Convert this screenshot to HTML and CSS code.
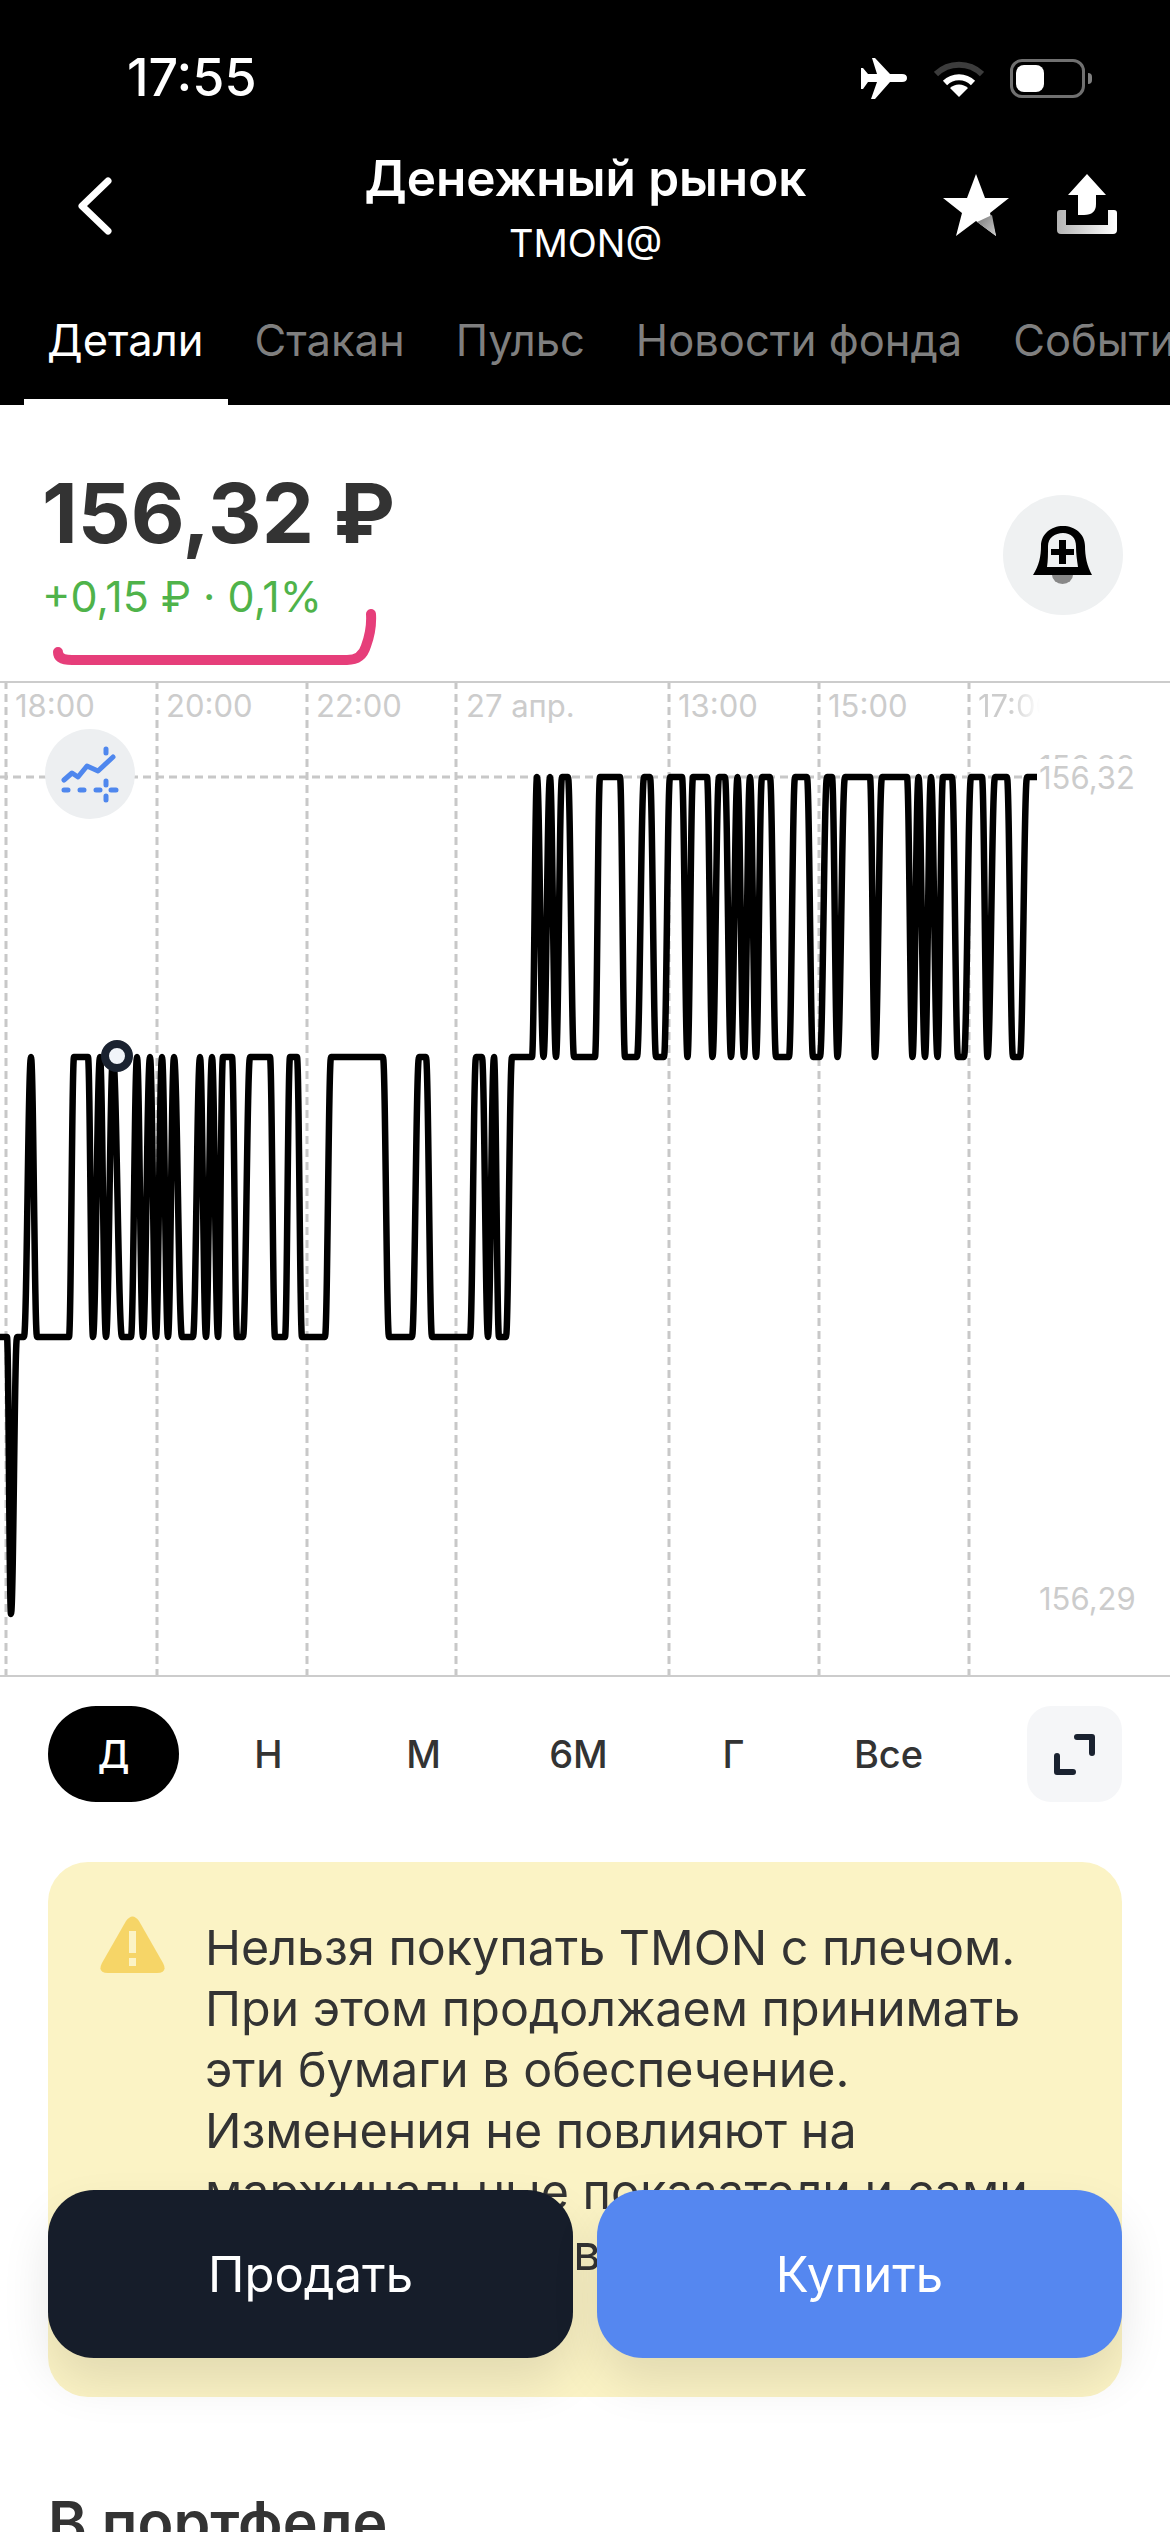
FILE: index.html
```html
<!DOCTYPE html>
<html lang="ru">
<head>
    <meta charset="UTF-8">
    <meta name="viewport" content="width=device-width, initial-scale=1.0">
    <title>Денежный рынок</title>
    <link rel="stylesheet" href="styles.css">
</head>
<body>
<div class="screen">
    <header class="top">
        <div class="status">
            <span class="time">17:55</span>
            <div class="status-icons">
                <svg class="plane" width="46" height="41" viewBox="0 0 46 41"><path fill="#fff" d="M46 20Q46 16 41 16H29L14 0H11L16 16H7L2 10H0V31H2L7 24H16L10 41H14L29 24H41Q46 24 46 20Z"/></svg>
                <svg class="wifi" width="50" height="37" viewBox="0 0 50 37" fill="none"><path d="M2 14A33 33 0 0 1 48 14" stroke="#3c3c3c" stroke-width="6"/><path d="M11 23A20 20 0 0 1 39 23" stroke="#fff" stroke-width="6"/><path fill="#fff" d="M25 37L16 28A13 13 0 0 1 34 28Z"/></svg>
                <div class="battery"><div class="battery-level"></div></div>
                <div class="battery-nub"></div>
            </div>
        </div>
        <div class="nav">
            <svg class="back" width="34" height="58" viewBox="0 0 34 58" fill="none"><path d="M30 4L4 29L30 54" stroke="#fff" stroke-width="7" stroke-linecap="round" stroke-linejoin="round"/></svg>
            <div class="title">
                <div class="title-name">Денежный рынок</div>
                <div class="title-ticker">TMON@</div>
            </div>
            <div class="nav-actions">
                <svg width="66" height="62" viewBox="0 0 66 62">
                    <defs><linearGradient id="starShade" x1="0" y1="0" x2="1" y2="1"><stop offset="0" stop-color="#777"/><stop offset="1" stop-color="#ccc"/></linearGradient></defs>
                    <path fill="#fff" d="M33 0L42 24H66L47 39L53 62L33 47L13 62L19 39L0 24H24Z"/>
                    <path fill="url(#starShade)" d="M34 48L49 41L53 62Z"/>
                </svg>
                <svg width="60" height="60" viewBox="0 0 60 60">
                    <defs><linearGradient id="trayShade" x1="0" y1="0" x2="1" y2="0"><stop offset="0" stop-color="#b4b4b4"/><stop offset="1" stop-color="#fff"/></linearGradient></defs>
                    <path fill="url(#trayShade)" d="M0 39Q0 36 3 36H9V51H51V36H57Q60 36 60 39V56Q60 60 56 60H4Q0 60 0 56Z"/>
                    <path fill="#fff" d="M30 0L49 21H39V30Q39 41 27 41H21V21H11Z"/>
                </svg>
            </div>
        </div>
        <nav class="tabs">
            <a class="tab active">Детали</a>
            <a class="tab">Стакан</a>
            <a class="tab">Пульс</a>
            <a class="tab">Новости фонда</a>
            <a class="tab">События</a>
        </nav>
    </header>

    <section class="price-block">
        <div>
            <div class="price">156,32 ₽</div>
            <div class="change">+0,15 ₽ · 0,1%</div>
        </div>
        <button class="bell">
            <svg width="60" height="58" viewBox="0 0 60 58">
                <path fill="#000" fill-rule="evenodd" d="M0 49C6 40 8 30 8 20C8 8 18 0 30 0C42 0 52 8 52 20C52 30 54 40 59 49ZM14 41H45C44 34 43 28 43 20C43 12 38 7 30 7C22 7 15 12 15 20C15 28 15 34 14 41Z"/>
                <path fill="#000" d="M26 14H33V23H41V29H33V38H26V29H18V23H26Z"/>
                <path fill="#888" d="M19 49H40A10.500 9 0 0 1 19 49Z"/>
            </svg>
        </button>
        <svg class="scribble" width="330" height="70" viewBox="0 0 330 70" fill="none"><path d="M6 44Q6 52 20 52H295Q310 52 314 38Q320 22 319 6" stroke="#e63e7a" stroke-width="10" stroke-linecap="round"/></svg>
    </section>

    <section class="chart">
        <svg class="chart-lines" width="1170" height="995" viewBox="0 681 1170 995" fill="none">
            <g class="grid">
                <path d="M6 681V1676M157 681V1676M307 681V1676M456 681V1676M669 681V1676M819 681V1676M969 681V1676"/>
                <path d="M0 777H1040"/>
            </g>
            <path class="price-line" id="priceLine"/>
            <circle cx="117" cy="1056" r="12" fill="#f1f4f9" stroke="#1a2230" stroke-width="8"/>
        </svg>
        <span class="axis-x" style="left:15px">18:00</span>
        <span class="axis-x" style="left:166px">20:00</span>
        <span class="axis-x" style="left:316px">22:00</span>
        <span class="axis-x" style="left:466px">27 апр.</span>
        <span class="axis-x" style="left:678px">13:00</span>
        <span class="axis-x" style="left:828px">15:00</span>
        <span class="axis-x axis-fade" style="left:978px">17:00</span>
        <div class="axis-y-clip"><span class="axis-y">156,32</span></div>
        <span class="axis-y axis-y-top">156,32</span>
        <span class="axis-y axis-y-low">156,29</span>
        <button class="indicators">
            <svg width="90" height="90" viewBox="45 729 90 90" fill="none" stroke="#4f87ee" stroke-linecap="round" stroke-linejoin="round">
                <path stroke-width="5" d="M64 780L72 773L78 777L87 766L98 771L113 757"/>
                <path stroke-width="5" d="M64 790H68M80 790H84M96 790H100M111 790H116M106 749V753M106 781V785M106 796V800"/>
            </svg>
        </button>
    </section>

    <div class="ranges">
        <button class="range active">Д</button>
        <button class="range">Н</button>
        <button class="range">М</button>
        <button class="range">6М</button>
        <button class="range">Г</button>
        <button class="range">Все</button>
        <button class="expand">
            <svg width="95" height="96" viewBox="1027 1707 95 96" fill="none" stroke="#1a2230" stroke-width="6" stroke-linecap="round" stroke-linejoin="round"><path d="M1077 1738H1092V1754M1057 1757V1773H1073"/></svg>
        </button>
    </div>

    <div class="notice">
        <svg class="notice-icon" width="65" height="57" viewBox="0 0 65 57">
            <path fill="#f6d567" d="M26 5Q32.500 -4 39 5L63 47Q68 57 57 57H8Q-3 57 2 47Z"/>
            <path fill="#fbf3c5" d="M29 15H36V37H29ZM29 42H36V50H29Z"/>
        </svg>
        <p class="notice-text">Нельзя покупать TMON с плечом.<br>При этом продолжаем принимать<br>эти бумаги в обеспечение.<br>Изменения не повлияют на<br>маржинальные показатели и сами<br>ставки риска и веса прежние</p>
    </div>

    <h2 class="section-title">В портфеле</h2>

    <div class="trade">
        <button class="trade-btn sell">Продать</button>
        <button class="trade-btn buy">Купить</button>
    </div>
</div>
<script src="chart.js"></script>
</body>
</html>
```

FILE: styles.css
```css
* {
    box-sizing: border-box;
}

html,
body {
    margin: 0;
    padding: 0;
    background-color: #ffffff;
}

body {
    font-family: Inter, "Noto Sans", sans-serif;
    color: #333333;
}

button {
    font-family: inherit;
    border: none;
    padding: 0;
}

.screen {
    position: relative;
    width: 1170px;
    height: 2532px;
    overflow: hidden;
}

/* header */
.top {
    height: 405px;
    background-color: #000000;
    color: #ffffff;
    overflow: hidden;
}

.status {
    height: 156px;
    display: flex;
    justify-content: space-between;
    align-items: center;
    padding: 0 78px 0 127px;
}

.time {
    font-size: 52px;
    font-weight: 500;
    line-height: 1;
}

.status-icons {
    display: flex;
    align-items: center;
}

.wifi {
    margin-left: 27px;
}

.battery {
    width: 75px;
    height: 39px;
    margin-left: 26px;
    padding: 3px;
    border: 3px solid #707070;
    border-radius: 12px;
}

.battery-level {
    width: 28px;
    height: 100%;
    background-color: #ffffff;
    border-radius: 8px;
}

.battery-nub {
    width: 4px;
    height: 11px;
    margin-left: 3px;
    background-color: #808080;
    border-radius: 0 4px 4px 0;
}

.nav {
    height: 159px;
    display: grid;
    grid-template-columns: 1fr auto 1fr;
    padding: 0 53px 0 54px;
}

.back {
    margin: 21px 0 0 24px;
}

.title {
    margin-top: -3px;
    text-align: center;
}

.title-name {
    font-size: 49.500px;
    font-weight: 600;
    line-height: 50px;
}

.title-ticker {
    margin-top: 18px;
    font-size: 38px;
    line-height: 44px;
}

.nav-actions {
    display: flex;
    justify-content: flex-end;
    align-items: flex-start;
    gap: 48px;
    margin-top: 18px;
}

.tabs {
    display: flex;
    gap: 3px;
    padding-left: 24px;
    white-space: nowrap;
}

.tab {
    padding: 0 25px 34px 23px;
    font-size: 43.500px;
    line-height: 50px;
    color: #7f7f7f;
    border-bottom: 6px solid transparent;
}

.tab.active {
    color: #ffffff;
    border-bottom-color: #ffffff;
}

/* price */
.price-block {
    position: relative;
    height: 276px;
    display: flex;
    justify-content: space-between;
    align-items: flex-start;
    padding: 62px 47px 0 42px;
}

.price {
    font-size: 83px;
    font-weight: 700;
    line-height: 92px;
}

.change {
    margin-top: 12px;
    font-size: 43px;
    line-height: 50px;
    color: #4fb34a;
}

.bell {
    width: 120px;
    height: 120px;
    margin-top: 28px;
    display: flex;
    align-items: center;
    justify-content: center;
    background-color: #eff1f2;
    border-radius: 50%;
}

.scribble {
    position: absolute;
    left: 52px;
    top: 203px;
}

/* chart */
.chart {
    position: relative;
    height: 996px;
    border-top: 2px solid #cccccc;
    border-bottom: 2px solid #cccccc;
    overflow: hidden;
}

.chart-lines {
    position: absolute;
    left: 0;
    top: -2px;
}

.grid path {
    stroke: #c8c8c8;
    stroke-width: 3;
    stroke-dasharray: 8 5;
}

.price-line {
    stroke: #000000;
    stroke-width: 6.500;
    stroke-linejoin: round;
}

.axis-x,
.axis-y {
    position: absolute;
    font-size: 31px;
    line-height: 36px;
    color: #cccccc;
    white-space: nowrap;
}

.axis-x {
    top: 5px;
}

.axis-fade {
    width: 62px;
    overflow: hidden;
    -webkit-mask-image: linear-gradient(to right, #000 50%, transparent);
    mask-image: linear-gradient(to right, #000 50%, transparent);
}

.axis-y-clip {
    position: absolute;
    left: 1039px;
    top: 66px;
    width: 110px;
    height: 10px;
    overflow: hidden;
}

.axis-y-clip .axis-y {
    left: 0;
    top: 0;
}

.axis-y-top {
    left: 1039px;
    top: 77px;
}

.axis-y-low {
    left: 1039px;
    top: 898px;
}

.indicators {
    position: absolute;
    left: 45px;
    top: 46px;
    width: 90px;
    height: 90px;
    background-color: #edeff1;
    border-radius: 50%;
}

.indicators svg,
.expand svg {
    display: block;
}

/* period switch */
.ranges {
    display: flex;
    gap: 24px;
    margin: 29px 48px 0;
}

.range {
    width: 131px;
    height: 96px;
    background: none;
    border-radius: 48px;
    font-size: 38px;
    font-weight: 500;
    color: #333333;
}

.range.active {
    background-color: #000000;
    color: #ffffff;
}

.expand {
    width: 95px;
    height: 96px;
    margin-left: auto;
    background-color: #f5f6f8;
    border-radius: 24px;
}

/* notice */
.notice {
    display: flex;
    height: 535px;
    margin: 60px 48px 0;
    padding: 55px 40px 0 52px;
    background-color: #fbf3c5;
    border-radius: 40px;
}

.notice-icon {
    flex: none;
    margin: -1px 40px 0 0;
}

.notice-text {
    margin: 0;
    font-size: 48.400px;
    line-height: 61px;
    color: #333333;
    white-space: nowrap;
}

.section-title {
    margin: 96px 48px 0;
    font-size: 59px;
    font-weight: 600;
    line-height: 60px;
    color: #333333;
}

/* buy / sell */
.trade {
    position: absolute;
    left: 48px;
    right: 48px;
    top: 2190px;
    display: flex;
    gap: 24px;
}

.trade-btn {
    flex: 1;
    height: 168px;
    border-radius: 46px;
    font-size: 49px;
    color: #ffffff;
    box-shadow: 0 24px 48px rgba(0, 0, 0, 0.1);
}

.sell {
    background-color: #161d2a;
}

.buy {
    background-color: #5587f0;
}
```

FILE: chart.js
```js
// price levels, px from the top of the page
var L = 1337, M = 1057, T = 777;

// [x, y] turning points of the price line
var points = [
    [-2, L], [7, L], [11, 1614], [17, L], [24, L], [31, M], [37, L], [69, L], [74, M], [88, M],
    [93, L], [100, M], [106, L], [113, M], [122, L], [131, L], [137, M], [143, L], [150, M],
    [156, L], [162, M], [168, L], [174, M], [182, L], [193, L], [200, M], [206, L], [212, M],
    [218, L], [223, M], [232, M], [237, L], [243, L], [250, M], [270, M], [275, L], [285, L],
    [290, M], [297, M], [302, L], [325, L], [331, M], [383, M], [389, L], [412, L], [419, M],
    [426, M], [432, L], [470, L], [476, M], [482, M], [488, L], [494, M], [499, L], [506, L],
    [512, M], [532, M], [537, T], [543.5, M], [550, T], [556, M], [562, T], [568, T], [574, M],
    [595, M], [600, T], [620, T], [625, M], [637, M], [644, T], [650, T], [656, M], [664, M],
    [670, T], [682, T], [687.5, M], [693, T], [707, T], [712.5, M], [719, T], [725, T], [731, M],
    [737.5, T], [744, M], [750, T], [756, M], [762, T], [770, T], [776, M], [789, M], [795, T],
    [807, T], [813, M], [820, M], [827, T], [832, T], [837.5, M], [845, T], [870, T], [875, M],
    [882, T], [907, T], [912.5, M], [918.5, T], [925, M], [931, T], [937.5, M], [943, T], [952, T],
    [958, M], [964, M], [971, T], [982, T], [987.5, M], [995, T], [1007, T], [1013, M], [1020, M],
    [1027, T], [1037, T]
];

// flat tangents at every point, so tops and bottoms come out round
var d = 'M' + points[0][0] + ' ' + points[0][1];
for (var i = 1; i < points.length; i++) {
    var a = points[i - 1], b = points[i];
    var dx = (b[0] - a[0]) * 0.4;
    d += 'C' + (a[0] + dx) + ' ' + a[1] + ' ' + (b[0] - dx) + ' ' + b[1] + ' ' + b[0] + ' ' + b[1];
}
document.getElementById('priceLine').setAttribute('d', d);
```
